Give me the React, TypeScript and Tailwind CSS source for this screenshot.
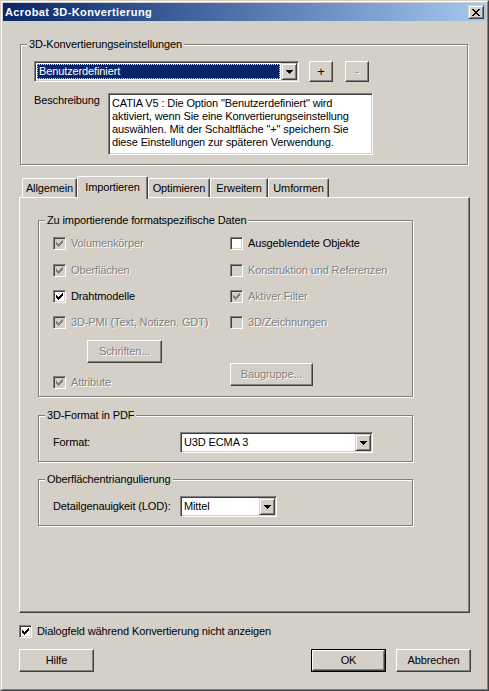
import React from "react";

const sunken =
  "border border-t-[#808080] border-l-[#808080] border-r-white border-b-white shadow-[inset_1px_1px_0_#404040,inset_-1px_-1px_0_#d4d0c8]";
const raised =
  "border border-t-white border-l-white border-r-[#404040] border-b-[#404040] shadow-[inset_-1px_-1px_0_#808080]";
const raisedSmall =
  "border border-t-[#d4d0c8] border-l-[#d4d0c8] border-r-[#404040] border-b-[#404040] shadow-[inset_1px_1px_0_#fff,inset_-1px_-1px_0_#808080]";
const disabledText = "text-[#808080] [text-shadow:1px_1px_0_#fff]";

function CheckGlyph({ color }: { color: string }) {
  const cols: [number, number][] = [
    [0, 2],
    [1, 3],
    [2, 4],
    [3, 3],
    [4, 2],
    [5, 1],
    [6, 0],
  ];
  return (
    <svg width="7" height="7" viewBox="0 0 7 7" shapeRendering="crispEdges" className="block">
      {cols.map(([x, y]) => (
        <rect key={x} x={x} y={y} width="1" height="3" fill={color} />
      ))}
    </svg>
  );
}

function CheckBox({ checked, disabled }: { checked?: boolean; disabled?: boolean }) {
  return (
    <div
      className={`w-[13px] h-[13px] shrink-0 flex items-center justify-center ${sunken} ${
        disabled ? "bg-[#d4d0c8]" : "bg-white"
      }`}
    >
      {checked && <CheckGlyph color={disabled ? "#808080" : "#000000"} />}
    </div>
  );
}

function CheckRow({
  label,
  checked,
  disabled,
  className,
}: {
  label: string;
  checked?: boolean;
  disabled?: boolean;
  className?: string;
}) {
  return (
    <div className={`flex items-center h-[13px] gap-[5px] whitespace-nowrap ${className ?? ""}`}>
      <CheckBox checked={checked} disabled={disabled} />
      <span className={disabled ? disabledText : "text-black"}>{label}</span>
    </div>
  );
}

function Arrow() {
  return (
    <svg width="7" height="4" viewBox="0 0 7 4" shapeRendering="crispEdges" className="block">
      <rect x="0" y="0" width="7" height="1" fill="#000" />
      <rect x="1" y="1" width="5" height="1" fill="#000" />
      <rect x="2" y="2" width="3" height="1" fill="#000" />
      <rect x="3" y="3" width="1" height="1" fill="#000" />
    </svg>
  );
}

function Combo({
  className,
  value,
  selected,
}: {
  className: string;
  value: string;
  selected?: boolean;
}) {
  return (
    <div className={`h-[21px] p-[1px] bg-white flex ${sunken} ${className}`}>
      {selected ? (
        <div className="flex-1 flex p-[1px]">
          <div className="flex-1 flex items-center bg-[#0a246a] border border-dotted border-[#f5db95] text-white pl-[1px] whitespace-nowrap">
            {value}
          </div>
        </div>
      ) : (
        <div className="flex-1 flex items-center pl-[2px] whitespace-nowrap">{value}</div>
      )}
      <div className={`w-[16px] h-[17px] bg-[#d4d0c8] flex items-center justify-center ${raisedSmall}`}>
        <Arrow />
      </div>
    </div>
  );
}

function Button({
  label,
  className,
  disabled,
}: {
  label: string;
  className: string;
  disabled?: boolean;
}) {
  return (
    <div
      className={`flex items-center justify-center bg-[#d4d0c8] whitespace-nowrap ${raised} ${className} ${
        disabled ? disabledText : "text-black"
      }`}
    >
      {label}
    </div>
  );
}

function GroupBox({
  label,
  className,
  children,
}: {
  label: string;
  className: string;
  children?: React.ReactNode;
}) {
  return (
    <div
      className={`relative border border-[#808080] shadow-[inset_1px_1px_0_#fff,1px_1px_0_#fff] ${className}`}
    >
      <span className="absolute left-[6px] -top-[7px] px-[2px] bg-[#d4d0c8] leading-[13px] whitespace-nowrap">
        {label}
      </span>
      {children}
    </div>
  );
}

function CloseGlyph() {
  const px: [number, number][] = [
    [0, 0], [1, 0], [6, 0], [7, 0],
    [1, 1], [2, 1], [5, 1], [6, 1],
    [2, 2], [3, 2], [4, 2], [5, 2],
    [3, 3], [4, 3],
    [2, 4], [3, 4], [4, 4], [5, 4],
    [1, 5], [2, 5], [5, 5], [6, 5],
    [0, 6], [1, 6], [6, 6], [7, 6],
  ];
  return (
    <svg width="8" height="7" viewBox="0 0 8 7" shapeRendering="crispEdges" className="block">
      {px.map(([x, y]) => (
        <rect key={`${x}-${y}`} x={x} y={y} width="1" height="1" fill="#000" />
      ))}
    </svg>
  );
}

function Tab({ label, className, selected }: { label: string; className: string; selected?: boolean }) {
  return (
    <div
      className={`flex items-center justify-center bg-[#d4d0c8] border-l border-t border-r border-l-white border-t-white border-r-[#404040] shadow-[inset_-1px_0_0_#808080] rounded-t-[2px] whitespace-nowrap ${
        selected ? "relative z-10 h-[23px] -mb-[2px] pb-[2px]" : "h-[19px]"
      } ${className}`}
    >
      {label}
    </div>
  );
}

export default function App() {
  return (
    <div className="w-[489px] h-[691px] bg-[#d4d0c8] border border-t-[#d4d0c8] border-l-[#d4d0c8] border-r-[#404040] border-b-[#404040] [font-family:'Liberation_Sans',Arial,sans-serif] text-[11px] leading-[13px] tracking-[-0.12px] text-black overflow-hidden">
      <div className="h-full border border-t-white border-l-white border-r-[#808080] border-b-[#808080] p-[1px] flex flex-col">
        {/* Title bar */}
        <div className="h-[18px] shrink-0 flex items-center bg-gradient-to-r from-[#0a246a] to-[#a6caf0]">
          <span className="pl-[2px] text-white font-bold text-[11px] tracking-[0.4px] whitespace-nowrap">
            Acrobat 3D-Konvertierung
          </span>
          <div
            className={`ml-auto mr-[2px] w-[16px] h-[14px] bg-[#d4d0c8] flex items-center justify-center ${raisedSmall}`}
          >
            <CloseGlyph />
          </div>
        </div>

        {/* Settings group */}
        <GroupBox label="3D-Konvertierungseinstellungen" className="ml-[17px] mt-[23px] w-[448px] h-[121px] shrink-0">
          <div className="flex mt-[16px] ml-[13px]">
            <Combo className="w-[265px]" value="Benutzerdefiniert" selected />
            <Button label="+" className="ml-[10px] w-[24px] h-[21px] text-[13px]" />
            <Button label="-" className="ml-[12px] w-[24px] h-[21px]" disabled />
          </div>
          <div className="flex mt-[11px] ml-[13px]">
            <div className="w-[74px] pt-[1px] whitespace-nowrap">Beschreibung</div>
            <div className={`w-[265px] h-[62px] bg-white pl-[3px] pt-[3px] whitespace-nowrap ${sunken}`}>
              CATIA V5 : Die Option "Benutzerdefiniert" wird
              <br />
              aktiviert, wenn Sie eine Konvertierungseinstellung
              <br />
              auswählen. Mit der Schaltfläche "+" speichern Sie
              <br />
              diese Einstellungen zur späteren Verwendung.
            </div>
          </div>
        </GroupBox>

        {/* Tabs */}
        <div className="flex items-end h-[21px] mt-[11px] ml-[16px] pl-[3px] shrink-0">
          <Tab label="Allgemein" className="w-[55px]" />
          <Tab label="Importieren" className="w-[71px]" selected />
          <Tab label="Optimieren" className="w-[62px]" />
          <Tab label="Erweitern" className="w-[58px]" />
          <Tab label="Umformen" className="w-[61px]" />
        </div>

        {/* Tab panel */}
        <div className="ml-[16px] w-[451px] h-[416px] shrink-0 border border-t-white border-l-white border-r-[#404040] border-b-[#404040] shadow-[inset_-1px_-1px_0_#808080]">
          <GroupBox
            label="Zu importierende formatspezifische Daten"
            className="ml-[18px] mt-[22px] w-[375px] h-[177px]"
          >
            <div className="flex pt-[16px] pl-[14px]">
              <div className="w-[177px] flex flex-col">
                <CheckRow label="Volumenkörper" checked disabled />
                <CheckRow label="Oberflächen" checked disabled className="mt-[14px]" />
                <CheckRow label="Drahtmodelle" checked className="mt-[13px]" />
                <CheckRow label="3D-PMI (Text, Notizen, GDT)" checked disabled className="mt-[13px]" />
                <Button label="Schriften..." className="mt-[11px] ml-[34px] w-[75px] h-[23px]" disabled />
                <CheckRow label="Attribute" checked disabled className="mt-[13px]" />
              </div>
              <div className="flex flex-col">
                <CheckRow label="Ausgeblendete Objekte" />
                <CheckRow label="Konstruktion und Referenzen" disabled className="mt-[14px]" />
                <CheckRow label="Aktiver Filter" checked disabled className="mt-[13px]" />
                <CheckRow label="3D/Zeichnungen" disabled className="mt-[13px]" />
                <Button label="Baugruppe..." className="mt-[34px] w-[83px] h-[23px]" disabled />
              </div>
            </div>
          </GroupBox>

          <GroupBox label="3D-Format in PDF" className="ml-[18px] mt-[18px] w-[375px] h-[47px]">
            <div className="flex items-center pt-[16px] pl-[14px]">
              <div className="w-[127px]">Format:</div>
              <Combo className="w-[193px]" value="U3D ECMA 3" />
            </div>
          </GroupBox>

          <GroupBox label="Oberflächentriangulierung" className="ml-[18px] mt-[17px] w-[375px] h-[47px]">
            <div className="flex items-center pt-[16px] pl-[14px]">
              <div className="w-[127px] whitespace-nowrap">Detailgenauigkeit (LOD):</div>
              <Combo className="w-[97px]" value="Mittel" />
            </div>
          </GroupBox>
        </div>

        {/* Bottom checkbox */}
        <CheckRow
          label="Dialogfeld während Konvertierung nicht anzeigen"
          checked
          className="mt-[12px] ml-[16px] shrink-0"
        />

        {/* Buttons */}
        <div className="flex mt-[11px] shrink-0">
          <Button label="Hilfe" className="ml-[16px] w-[75px] h-[23px]" />
          <div className="ml-auto w-[75px] h-[23px] border border-black flex">
            <div className={`flex-1 flex items-center justify-center bg-[#d4d0c8] ${raised}`}>OK</div>
          </div>
          <Button label="Abbrechen" className="ml-[10px] mr-[15px] w-[75px] h-[23px]" />
        </div>
      </div>
    </div>
  );
}
